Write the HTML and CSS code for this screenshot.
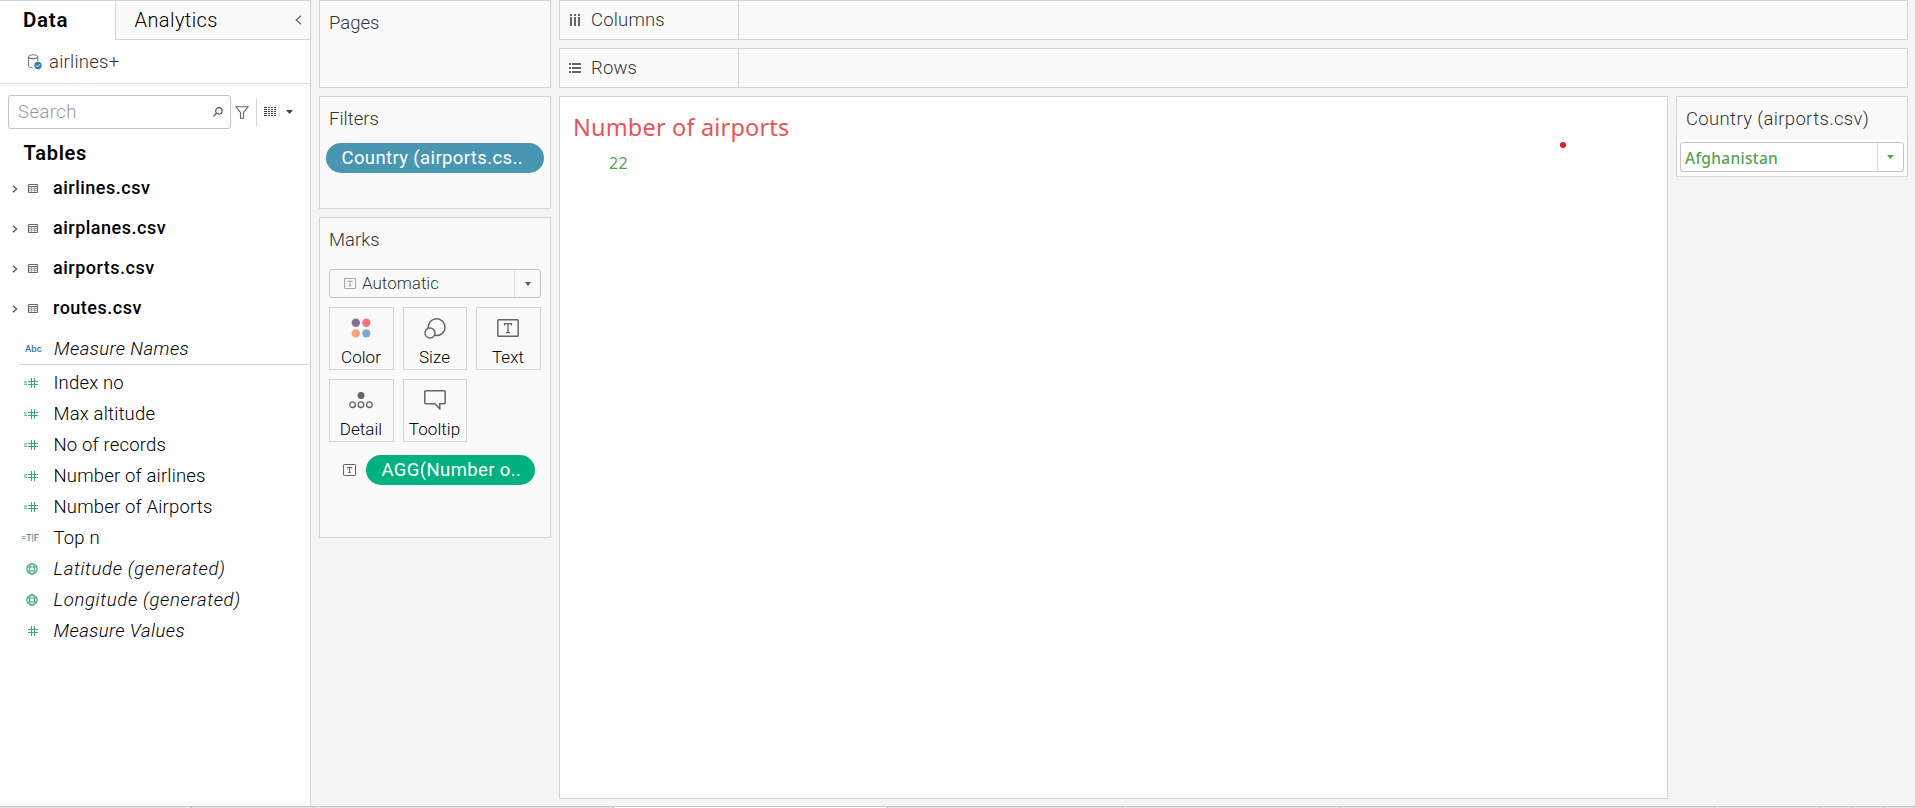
FILE: index.html
```
<!DOCTYPE html>
<html lang="en">
<head>
<meta charset="utf-8">
<title>Number of airports</title>
<link rel="stylesheet" href="styles.css">
</head>
<body>
<svg class="defs" width="0" height="0">
  <symbol id="chevron" viewBox="0 0 6 8"><path d="M1 .8 4.600 4 1 7.200" fill="none" stroke="#555" stroke-width="1.300"/></symbol>
  <symbol id="table" viewBox="0 0 10 9"><path d="M.5 2.500h9 M.5 4.500h9 M.5 6.500h9 M3.500 2.500v6 M6.500 2.500v6" fill="none" stroke="#999" stroke-width=".8"/><path d="M.5 .5h9v8h-9z M.5 2.500h9" fill="none" stroke="#666"/></symbol>
  <symbol id="calc" viewBox="0 0 14 10"><path d="M0 4h3 M0 6.200h3 M4 3.500h10 M4 6.500h10 M7.500 0v10 M10.500 0v10" fill="none" stroke="#3fa582"/></symbol>
  <symbol id="hash" viewBox="0 0 10 10"><path d="M0 3.500h10 M0 6.500h10 M3.500 0v10 M6.500 0v10" fill="none" stroke="#3fa582"/></symbol>
  <symbol id="globe" viewBox="0 0 12 12"><g fill="none" stroke="#3fa582"><circle cx="6" cy="6" r="5.200" stroke-width="1.200"/><ellipse cx="6" cy="6" rx="2.400" ry="5.200"/><path d="M1.300 4h9.400 M1.300 8h9.400"/></g></symbol>
  <symbol id="boxt" viewBox="0 0 22 18"><g fill="none" stroke="currentColor"><rect x=".8" y=".8" width="20.400" height="16.400" rx=".8" stroke-width="1.500"/><path d="M7.600 6.600V4.700h6.800v1.900 M11 4.700v8.800 M9 13.600h4" stroke-width="1.300"/></g></symbol>
  <symbol id="boxt-small" viewBox="0 0 13 12"><g fill="none" stroke="currentColor"><rect x=".5" y=".5" width="12" height="11" rx=".6"/><path d="M4.300 4.600V3.500h4.400v1.100 M6.500 3.500v5 M5.200 8.500h2.600"/></g></symbol>
</svg>
<div class="workspace">
  <aside class="data-pane">
    <div class="tabs">
      <div class="tab active">Data</div>
      <div class="tab other"><span>Analytics</span><svg width="7" height="10" viewBox="0 0 7 10"><path d="M6 .7 1.200 5 6 9.300" fill="none" stroke="#666" stroke-width="1.300"/></svg></div>
    </div>
    <div class="source">
      <svg width="14" height="16" viewBox="0 0 14 16"><g fill="none" stroke="#777"><path d="M4.500 13.800C2 13.600.6 13 .6 12V2.700M9.800 7V2.700"/><ellipse cx="5.200" cy="2.700" rx="4.600" ry="2"/><path d="M.6 3.200c.8 2.200 8.400 2.200 9.200 0"/></g><circle cx="10" cy="11.500" r="3.700" fill="#3181a2"/><path d="m8.200 11.500 1.300 1.400 2.300-2.600" fill="none" stroke="#fff"/></svg>
      <span>airlines+</span>
    </div>
    <div class="search-row">
      <div class="search"><span>Search</span><svg width="10" height="10" viewBox="0 0 10 10"><circle cx="5.900" cy="3.900" r="3.200" fill="none" stroke="#555" stroke-width="1.200"/><path d="M3.500 6.300.4 9.400" stroke="#555" stroke-width="1.300"/></svg></div>
      <svg class="funnel" width="14" height="13" viewBox="0 0 14 13"><path d="M.8.700h12.400L8.500 6.500v5.700h-3V6.500z" fill="none" stroke="#666" stroke-width="1.100"/></svg>
      <i class="rule"></i>
      <svg class="grid" width="12" height="10" viewBox="0 0 12 10"><path d="M0 .5h12M0 2.500h12M0 4.500h12M0 6.500h12M0 8.500h12" stroke="#444" stroke-dasharray="3 1 2 1 2 1 2 0"/></svg>
      <svg width="7" height="4" viewBox="0 0 7 4"><path d="M0 0h7L3.500 4z" fill="#444"/></svg>
    </div>
    <h2>Tables</h2>
    <ul class="tables">
      <li><svg width="6" height="8"><use href="#chevron"/></svg><svg width="10" height="9"><use href="#table"/></svg><span>airlines.csv</span></li>
      <li><svg width="6" height="8"><use href="#chevron"/></svg><svg width="10" height="9"><use href="#table"/></svg><span>airplanes.csv</span></li>
      <li><svg width="6" height="8"><use href="#chevron"/></svg><svg width="10" height="9"><use href="#table"/></svg><span>airports.csv</span></li>
      <li><svg width="6" height="8"><use href="#chevron"/></svg><svg width="10" height="9"><use href="#table"/></svg><span>routes.csv</span></li>
    </ul>
    <div class="names"><b class="abc">Abc</b><em>Measure Names</em></div>
    <ul class="fields">
      <li><span class="ic"><svg width="14" height="10"><use href="#calc"/></svg></span>Index no</li>
      <li><span class="ic"><svg width="14" height="10"><use href="#calc"/></svg></span>Max altitude</li>
      <li><span class="ic"><svg width="14" height="10"><use href="#calc"/></svg></span>No of records</li>
      <li><span class="ic"><svg width="14" height="10"><use href="#calc"/></svg></span>Number of airlines</li>
      <li><span class="ic"><svg width="14" height="10"><use href="#calc"/></svg></span>Number of Airports</li>
      <li><span class="ic tf">=T|F</span>Top n</li>
      <li><span class="ic"><svg width="12" height="12"><use href="#globe"/></svg></span><em class="generated">Latitude (generated)</em></li>
      <li><span class="ic"><svg width="12" height="12"><use href="#globe"/></svg></span><em class="generated">Longitude (generated)</em></li>
      <li><span class="ic"><svg width="10" height="10"><use href="#hash"/></svg></span><em>Measure Values</em></li>
    </ul>
  </aside>
  <section class="cards">
    <div class="card pages"><h3>Pages</h3></div>
    <div class="card filters"><h3>Filters</h3><div class="pill blue">Country (airports.cs..</div></div>
    <div class="card marks">
      <h3>Marks</h3>
      <div class="select mark-type"><svg width="12" height="11"><use href="#boxt-small"/></svg><span>Automatic</span><i class="drop"><svg width="6" height="4" viewBox="0 0 6 4"><path d="M0 0h6L3 4z" fill="#555"/></svg></i></div>
      <div class="buttons">
        <div class="btn"><svg width="20" height="20" viewBox="0 0 20 20"><circle cx="4.800" cy="4.800" r="4.200" fill="#86709a"/><circle cx="15.300" cy="4.800" r="4.200" fill="#fb7180"/><circle cx="4.800" cy="15.400" r="4.200" fill="#f4a57c"/><circle cx="15.300" cy="15.400" r="4.200" fill="#80a6cd"/></svg>Color</div>
        <div class="btn"><svg width="22" height="21" viewBox="0 0 22 21"><g fill="#fafafa" stroke="#666" stroke-width="1.500"><circle cx="12.600" cy="9.200" r="8.400"/><circle cx="6" cy="15" r="5"/></g></svg>Size</div>
        <div class="btn"><svg class="t" width="22" height="18"><use href="#boxt"/></svg>Text</div>
        <div class="btn"><svg class="detail" width="24" height="17" viewBox="0 0 24 17"><circle cx="12" cy="3.500" r="3.500" fill="#666"/><g fill="none" stroke="#666" stroke-width="1.300"><circle cx="3.600" cy="12.700" r="2.800"/><circle cx="12" cy="12.700" r="2.800"/><circle cx="20.400" cy="12.700" r="2.800"/></g></svg>Detail</div>
        <div class="btn"><svg width="22" height="20" viewBox="0 0 22 20"><path d="M1.800.8h18.400a1 1 0 0 1 1 1v11a1 1 0 0 1-1 1h-4.400v5l-5-5h-9a1 1 0 0 1-1-1v-11a1 1 0 0 1 1-1z" fill="none" stroke="#666" stroke-width="1.500"/></svg>Tooltip</div>
      </div>
      <div class="mark"><svg width="13" height="12"><use href="#boxt-small"/></svg><div class="pill green">AGG(Number o..</div></div>
    </div>
  </section>
  <main class="main">
    <div class="shelf"><div class="shelf-name"><svg width="12" height="12" viewBox="0 0 12 12"><path d="M2 0v2M6 0v2M10 0v2M2 3v9M6 3v9M10 3v9" stroke="#666" stroke-width="2"/></svg>Columns</div></div>
    <div class="shelf"><div class="shelf-name"><svg width="12" height="12" viewBox="0 0 12 12"><path d="M0 2h2M0 6h2M0 10h2M3 2h9M3 6h9M3 10h9" stroke="#666" stroke-width="2"/></svg>Rows</div></div>
    <div class="lower">
      <div class="view"><h1>Number of airports</h1><div class="value">22</div><i class="dot"></i></div>
      <div class="legend">
        <h3>Country (airports.csv)</h3>
        <div class="select country"><span>Afghanistan</span><i class="drop"><svg width="7" height="4" viewBox="0 0 6 4"><path d="M-.5 0h7L3 4z" fill="#59a14f"/></svg></i></div>
      </div>
    </div>
  </main>
</div>
<footer class="sheets"><i></i><i></i><i></i><i class="current"></i><i></i><i></i><i></i><i></i><i></i><i></i><i></i></footer>
</body>
</html>
```
FILE: styles.css
```
* { box-sizing: border-box; }
body { margin: 0; width: 1915px; height: 808px; overflow: hidden; background: #f4f4f4; font: 300 18.5px Roboto, sans-serif; color: #000; letter-spacing: .17px; }
h1, h2, h3, ul { margin: 0; padding: 0; font-weight: inherit; font-size: inherit; }
li { list-style: none; }
svg { display: block; flex: none; }
.defs { position: absolute; }
.workspace { display: flex; height: 806px; }

.data-pane { width: 311px; background: #fff; border-top: 1px solid #d4d4d4; border-right: 1px solid #d4d4d4; }
.tabs { display: flex; height: 39px; font-size: 20px; line-height: 38px; }
.tab.active { width: 115px; padding-left: 23px; font-size: 20.500px; font-weight: 600; color: #000; letter-spacing: .75px; }
.tab.other { flex: 1; display: flex; align-items: center; justify-content: space-between; padding: 0 8px 0 18.500px; background: #fafafa; border-left: 1px solid #d4d4d4; border-bottom: 1px solid #d4d4d4; letter-spacing: .42px; }
.source { display: flex; align-items: center; gap: 7px; height: 44px; padding-left: 28px; border-bottom: 1px solid #e0e0e0; color: #333; letter-spacing: .25px; }
.search-row { display: flex; align-items: center; padding: 11px 0 0 8px; }
.search { width: 223px; height: 34px; display: flex; align-items: center; justify-content: space-between; padding: 0 7px 1px 9px; border: 1px solid #c4c4c4; border-radius: 3px; color: #999; letter-spacing: .45px; }
.search span { padding-top: 1px; }
.funnel { margin-left: 4px; }
.rule { width: 1px; height: 27px; margin: 0 7px; background: #d4d4d4; }
.grid { margin-right: 10px; }
h2 { padding-left: 23.500px; height: 39px; line-height: 48px; font-size: 20px; font-weight: 600; color: #000; letter-spacing: .75px; }
.tables li { display: flex; align-items: center; height: 40px; padding-left: 12px; font-size: 18px; font-weight: 500; color: #000; letter-spacing: .5px; }
.tables span { padding-bottom: 2px; }
.tables svg { margin: 2px 10px 0 0; }
.tables svg + svg { margin: 1px 15px 0 0; }
.names { display: flex; align-items: center; height: 37px; margin-left: 18px; padding-top: 5px; border-bottom: 1px solid #d9d9d9; }
.abc { width: 36px; padding-left: 7px; font: 500 9.500px Roboto, sans-serif; color: #3b7b98; letter-spacing: 0; }
em { letter-spacing: .42px; }
em.generated { letter-spacing: .68px; }
.fields { padding-top: 2px; }
.fields li { display: flex; align-items: center; height: 31px; padding-left: 20px; }
.ic { display: flex; justify-content: flex-end; width: 18px; margin-right: 15.500px; }
.ic svg { margin-top: 1px; }
.tf { width: 19px; margin-right: 14.500px; font: 400 9.500px/12px Roboto, sans-serif; color: #2f7c9c; white-space: nowrap; letter-spacing: -.1px; }

.cards { width: 232px; margin-left: 8px; display: flex; flex-direction: column; gap: 8px; }
.card { border: 1px solid #d4d4d4; background: #fafafa; }
h3 { padding-left: 9px; height: 44px; line-height: 44px; color: #333; }
.card h3 { letter-spacing: 0; }
.pages { height: 88px; }
.filters { height: 113px; }
.marks { height: 321px; }
.pill { height: 30px; padding-left: 15.500px; border-radius: 15px; line-height: 31px; font-size: 18.500px; font-weight: 400; color: #fff; letter-spacing: .38px; white-space: nowrap; }
.blue { width: 218px; margin: 2px 0 0 6px; background: #4996b2; }
.green { width: 169px; background: #00b180; }
.select { display: flex; align-items: center; border: 1px solid #c4c4c4; border-radius: 3px; }
.drop { display: flex; align-items: center; justify-content: center; align-self: stretch; width: 26px; margin-left: auto; border-left: 1px solid #ddd; }
.mark-type { width: 212px; height: 29px; margin: 7px 0 9px 9px; padding-left: 14px; gap: 6px; font-size: 17px; letter-spacing: 0; color: #333; }
.mark-type > svg { color: #999; }
.mark-type span { padding-bottom: 2px; }
.buttons { display: grid; grid-template-columns: 65px 64px 65px; gap: 9px; margin-left: 9px; }
.btn { display: flex; flex-direction: column; align-items: center; justify-content: space-between; height: 63px; padding: 10px 1px 0 0; border: 1px solid #d4d4d4; font-size: 17px; line-height: 24px; letter-spacing: .05px; }
.btn .t { color: #666; margin-top: 1px; }
.btn .detail { margin-top: 2px; }
.mark { display: flex; align-items: center; gap: 10px; margin: 13px 0 0 23px; color: #666; }

.main { width: 1349px; margin-left: 8px; display: flex; flex-direction: column; gap: 8px; }
.shelf { height: 40px; border: 1px solid #d4d4d4; background: #fafafa; }
.shelf-name { display: flex; align-items: center; gap: 10px; width: 179px; height: 38px; padding-left: 9px; border-right: 1px solid #d4d4d4; color: #333; }
.lower { display: flex; align-items: flex-start; gap: 8px; }
.view { position: relative; width: 1109px; height: 703px; border: 1px solid #d4d4d4; background: #fff; padding: 14px 0 0 13px; font-family: "Noto Sans", sans-serif; }
h1 { font-size: 23.500px; line-height: 32px; font-weight: 400; color: #e15759; }
.value { padding: 10px 0 0 36px; font-size: 16px; line-height: 20px; font-weight: 400; color: #59a14f; letter-spacing: .3px; }
.dot { position: absolute; left: 1000px; top: 45px; width: 6px; height: 6px; border-radius: 50%; background: #ec1c24; }
.legend { width: 232px; height: 81px; border: 1px solid #d4d4d4; background: #fff; }
.legend h3 { height: 42px; background: #fafafa; letter-spacing: .35px; }
.country { width: 224px; height: 30px; margin: 3px 0 0 3px; padding-left: 4px; font: 500 15.500px "Noto Sans", sans-serif; color: #59a14f; letter-spacing: .3px; }
.country span { padding-top: 2px; }

.sheets { display: grid; grid-template-columns: 192px 122px 300px 274px 235px 218px 374px 105px 32px 32px 31px; height: 2px; border-top: 1px solid #c8c8c8; background: #e6e6e6; }
.sheets i { height: 1px; border-right: 1px solid #c0c0c0; }
.sheets .current { background: #fff; }
```
